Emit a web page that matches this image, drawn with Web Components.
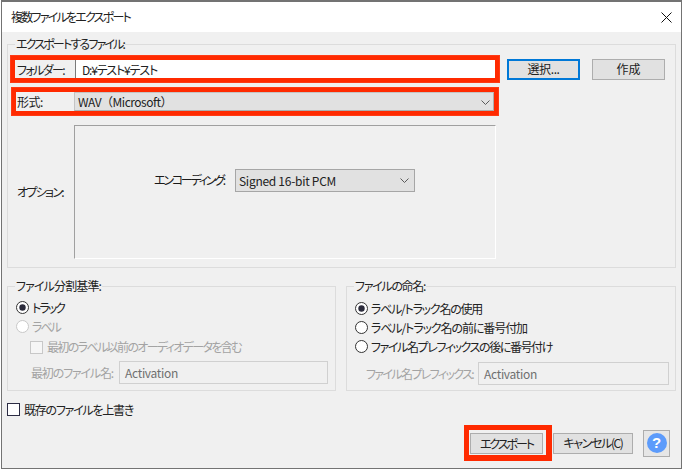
<!DOCTYPE html>
<html lang="ja"><head><meta charset="utf-8"><title>複数ファイルをエクスポート</title>
<style>
html,body{margin:0;padding:0;background:#fff}
body{font:12px/16px "Noto Sans CJK JP","Noto Sans",sans-serif;color:#1a1a1a;font-feature-settings:"palt"}
.row{display:flex;align-items:center}
</style></head><body>
<dialog-window>
  <title-bar slot="title"><fit-text w="119">複数ファイルをエクスポート</fit-text></title-bar>

  <group-box label="エクスポートするファイル:" lw="108" style="height:224px;--pt:10px">
    <div class="row" style="gap:7px">
      <red-frame style="margin-left:2px;width:490px;height:28px">
        <field-label width="58" style="padding:1px 0 0 2px"><fit-text w="47">フォルダー:</fit-text></field-label>
        <path-input><fit-text w="75">D:¥テスト¥テスト</fit-text></path-input>
      </red-frame>
      <ui-button width="73" height="21" focused><fit-text w="32">選択...</fit-text></ui-button>
      <ui-button width="73" height="21" style="margin-left:5px">作成</ui-button>
    </div>
    <red-frame style="margin:4px 0 0 3px;width:488px;height:29px">
      <field-label width="57" style="padding:1px 0 0 1px"><fit-text w="26">形式:</fit-text></field-label>
      <ui-select flush><fit-text w="94" nopalt>WAV（Microsoft）</fit-text></ui-select>
    </red-frame>
    <div style="display:flex;margin-top:9px">
      <field-label width="57" style="padding:58px 0 0 9px"><fit-text w="46">オプション:</fit-text></field-label>
      <options-panel>
        <span style="width:81px;flex:none;white-space:nowrap"><fit-text w="70">エンコーディング:</fit-text></span>
        <ui-select style="width:180px;height:23px"><fit-text w="97">Signed 16-bit PCM</fit-text></ui-select>
      </options-panel>
    </div>
  </group-box>

  <div style="display:flex;gap:10px;margin-top:18px">
    <group-box label="ファイル分割基準:" lw="85" style="width:329px;height:105px;--pt:11px">
      <ui-radio checked><fit-text w="32">トラック</fit-text></ui-radio>
      <ui-radio disabled><fit-text w="28">ラベル</fit-text></ui-radio>
      <ui-check disabled style="margin:2px 0 0 14px;height:18px"><fit-text w="194">最初のラベル以前のオーディオデータを含む</fit-text></ui-check>
      <name-field label="最初のファイル名:" tw="82" lw="88" iw="209" style="margin:5px 0 0 15px"><fit-text w="53">Activation</fit-text></name-field>
    </group-box>
    <group-box label="ファイルの命名:" lw="70" style="width:330px;height:105px;--pt:12px">
      <ui-radio checked><fit-text w="111">ラベル/トラック名の使用</fit-text></ui-radio>
      <ui-radio><fit-text w="156">ラベル/トラック名の前に番号付加</fit-text></ui-radio>
      <ui-radio><fit-text w="181">ファイル名プレフィックスの後に番号付け</fit-text></ui-radio>
      <name-field label="ファイル名プレフィックス:" tw="107" lw="112" iw="191" style="margin:6px 0 0 11px"><fit-text w="53">Activation</fit-text></name-field>
    </group-box>
  </div>

  <ui-check style="margin-top:12px;height:13px"><fit-text w="109">既存のファイルを上書き</fit-text></ui-check>

  <div class="row" style="margin-top:9px;height:36px;justify-content:flex-end;padding-right:6px">
    <red-frame plain style="width:88px;height:36px">
      <ui-button width="73" height="21"><fit-text w="53">エクスポート</fit-text></ui-button>
    </red-frame>
    <ui-button width="80" height="21" style="margin-left:1px"><fit-text w="59">キャンセル(C)</fit-text></ui-button>
    <help-button style="margin-left:10px"></help-button>
  </div>
</dialog-window>

<script>
function def(name, css, html, init){
  customElements.define(name, class extends HTMLElement{
    constructor(){super();const r=this.attachShadow({mode:'open'});
      r.innerHTML='<style>'+css+'</style>'+html;}
    connectedCallback(){if(init)init(this,this.shadowRoot);}
  });
}
const chevron='<svg width="9" height="5" viewBox="0 0 9 5" fill="none" stroke="#5a5a5a" stroke-width="1"><path d="M.5.5l4 4 4-4"/></svg>';

def('dialog-window',
 `:host{display:flex;flex-direction:column;box-sizing:border-box;margin-left:1px;width:681px;height:469px;
   border:1px solid #737373;border-top-width:2px;background:#f0f0f0;overflow:hidden}
  .main{padding:12px 5px 0;display:flex;flex-direction:column}`,
 `<slot name="title"></slot><div class="main"><slot></slot></div>`);

def('title-bar',
 `:host{display:flex;align-items:center;justify-content:space-between;height:30px;background:#fff;padding:0 9px 0 9px;color:#222}
  svg{display:block}`,
 `<span><slot></slot></span><svg width="11" height="11" viewBox="0 0 11 11" stroke="#111" stroke-width="1" fill="none"><path d="M.5.5l10 10M10.5.5l-10 10"/></svg>`);

def('group-box',
 `:host{display:block;box-sizing:border-box;border:1px solid #dcdcdc}
  .lg{position:absolute;left:7px;top:-9px;background:#f0f0f0;padding:0 1px;line-height:16px;color:#222;white-space:nowrap}
  .in{position:relative;height:0}
  .body{padding-top:var(--pt,10px);display:flex;flex-direction:column}`,
 `<div class="in"><span class="lg"></span></div><div class="body"><slot></slot></div>`,
 (h,r)=>{const t=document.createElement('fit-text');t.setAttribute('w',h.getAttribute('lw'));t.textContent=h.getAttribute('label');r.querySelector('.lg').append(t);});

def('red-frame',
 `:host{display:flex;box-sizing:border-box;border:5px solid #ff2a00;outline:1px solid rgba(255,90,60,.35);outline-offset:-1px;flex:none;align-items:stretch}
  :host([plain]){border-width:5px 6px 6px 5px;padding:3px 3px 1px 1px;align-items:flex-start;outline:none}`,
 `<slot></slot>`);

def('field-label',
 `:host{display:block;flex:none;line-height:18px;white-space:nowrap;color:#222;background:#f0f0f0}`,
 `<slot></slot>`,
 (h)=>{h.style.width=h.getAttribute('width')+'px';});

def('path-input',
 `:host{display:block;flex:1;background:#fff;border-left:1px solid #7a7a7a;padding:1px 0 0 6px;line-height:17px;color:#222;white-space:nowrap}`,
 `<slot></slot>`);

def('ui-button',
 `:host{display:flex;flex:none;box-sizing:border-box;align-items:center;justify-content:center;background:#e1e1e1;border:1px solid #adadad;color:#222;white-space:nowrap;line-height:16px}
  :host([focused]){border:2px solid #0078d7}`,
 `<slot></slot>`,
 (h)=>{h.style.width=h.getAttribute('width')+'px';h.style.height=h.getAttribute('height')+'px';});

def('ui-select',
 `:host{display:flex;flex:none;box-sizing:border-box;align-items:center;justify-content:space-between;background:#e1e1e1;border:1px solid #a6a6a6;padding:0 5px 0 3px;color:#222;white-space:nowrap}
  :host([flush]){flex:1;padding:1px 3px 0 3px;border-color:#c4c4c4 #adadad #adadad #c4c4c4}`,
 `<span><slot></slot></span>${chevron}`);

def('options-panel',
 `:host{display:flex;align-items:flex-start;box-sizing:border-box;width:422px;height:134px;border:1px solid;border-color:#a0a0a0 #fff #fff #a0a0a0;padding:43px 0 0 79px}
  ::slotted(span){line-height:21px}`,
 `<slot></slot>`);

def('ui-radio',
 `:host{display:flex;align-items:center;height:19px;padding-left:8px;white-space:nowrap;color:#222}
  :host([disabled]){color:#a3a3a3}
  svg{flex:none;margin-right:3px}`,
 `<svg width="13" height="13" viewBox="0 0 13 13"><circle class="o" cx="6.5" cy="6.5" r="6" fill="#fff" stroke="#333" stroke-width="1"/><circle class="d" cx="6.5" cy="6.5" r="3.2" fill="#2b2b3b"/></svg><span><slot></slot></span>`,
 (h,r)=>{ if(!h.hasAttribute('checked')) r.querySelector('.d').remove();
   if(h.hasAttribute('disabled')) r.querySelector('.o').setAttribute('stroke','#c8c8c8');});

def('ui-check',
 `:host{display:flex;align-items:center;white-space:nowrap;color:#222;gap:4px}
  :host([disabled]){color:#a3a3a3;padding-left:8px}
  i{display:block;flex:none;box-sizing:border-box;width:13px;height:13px;background:#fff;border:1px solid #2c2c44}
  :host([disabled]) i{border-color:#c8c8c8;background:#f6f6f6}`,
 `<i></i><span><slot></slot></span>`);

def('name-field',
 `:host{display:flex;align-items:center;padding-left:8px;white-space:nowrap}
  .l{color:#a3a3a3;flex:none}
  .i{box-sizing:border-box;flex:none;height:23px;background:#f0f0f0;border:1px solid #d0d0d0;padding-left:5px;line-height:21px;color:#6f6f6f}`,
 `<span class="l"></span><span class="i"><slot></slot></span>`,
 (h,r)=>{const l=r.querySelector('.l');const t=document.createElement('fit-text');t.setAttribute('w',h.getAttribute('tw'));t.textContent=h.getAttribute('label');l.append(t);l.style.width=h.getAttribute('lw')+'px';
   r.querySelector('.i').style.width=h.getAttribute('iw')+'px';});

def('help-button',
 `:host{display:flex;flex:none;box-sizing:border-box;width:27px;height:27px;border:1px solid #adadad;background:#e6e6e6;align-items:center;justify-content:center}
  b{display:block;width:20px;height:20px;border-radius:50%;background:#5c9bfb;color:#fff;font:bold 15px/20px "Liberation Sans",sans-serif;text-align:center}`,
 `<b>?</b>`);

/* kana in the original UI font are far narrower than any installed face: fit each text to its measured width */
customElements.define('fit-text', class extends HTMLElement{
  constructor(){super();const r=this.attachShadow({mode:'open'});
    r.innerHTML='<style>:host{display:inline-block;white-space:nowrap}:host([nopalt]){font-feature-settings:normal}</style><slot></slot>';}
  connectedCallback(){
    const w=+this.getAttribute('w'),n=this.textContent.length;
    this.style.letterSpacing='0';
    const a=this.getBoundingClientRect().width;
    if(a&&w) this.style.letterSpacing=((w-a)/n).toFixed(3)+'px';
  }
});
</script>
</body></html>
